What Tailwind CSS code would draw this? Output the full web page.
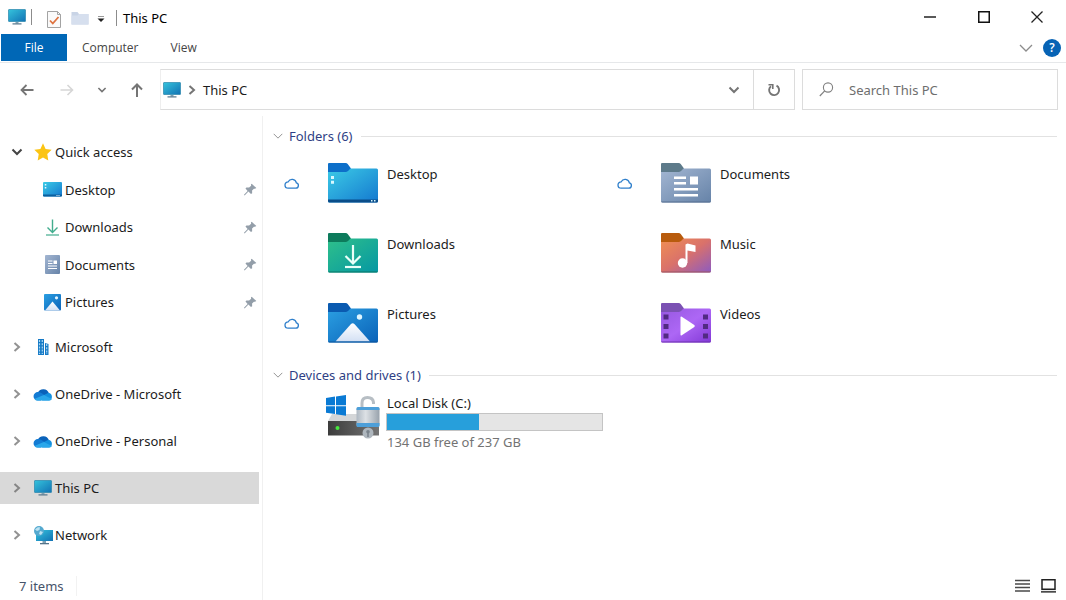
<!DOCTYPE html>
<html lang="en">
<head>
<meta charset="utf-8">
<meta name="viewport" content="width=device-width, initial-scale=1">
<title>This PC</title>
<script src="https://cdn.jsdelivr.net/npm/@tailwindcss/browser@4"></script>
</head>
<body class="bg-white font-['Noto_Sans','Open_Sans',sans-serif] text-[13px] leading-5 text-[#1c1c1c]">
<svg class="absolute size-0" aria-hidden="true">
  <defs>
    <linearGradient id="gScreen" x1="0" y1="0" x2="1" y2="1"><stop offset="0" stop-color="#35c3dc"/><stop offset="1" stop-color="#1272b4"/></linearGradient>
    <linearGradient id="gDesk" x1="0" y1="0" x2="1" y2="1"><stop offset="0" stop-color="#3ccbe6"/><stop offset="1" stop-color="#1478cf"/></linearGradient>
    <linearGradient id="gDown" x1="0" y1="0" x2="1" y2="1"><stop offset="0" stop-color="#2fc08a"/><stop offset="1" stop-color="#0597a3"/></linearGradient>
    <linearGradient id="gPic" x1="0" y1="0" x2="1" y2="1"><stop offset="0" stop-color="#2b9fe2"/><stop offset="1" stop-color="#0a62b8"/></linearGradient>
    <linearGradient id="gDoc" x1="0" y1="0" x2="1" y2="1"><stop offset="0" stop-color="#a3b6d2"/><stop offset="1" stop-color="#6683a8"/></linearGradient>
    <linearGradient id="gMus" x1="0" y1="0" x2="1" y2="1"><stop offset="0" stop-color="#f08f52"/><stop offset=".5" stop-color="#d9716b"/><stop offset="1" stop-color="#8d5bc0"/></linearGradient>
    <linearGradient id="gVid" x1="0" y1="0" x2="1" y2="1"><stop offset="0" stop-color="#9658e0"/><stop offset=".5" stop-color="#ad67f5"/><stop offset="1" stop-color="#8238d6"/></linearGradient>
    <linearGradient id="gHill" x1="0" y1="0" x2="0" y2="1"><stop offset="0" stop-color="#ffffff"/><stop offset="1" stop-color="#d3e0f4"/></linearGradient>
    <linearGradient id="gDrive" x1="0" y1="0" x2="1" y2="0"><stop offset="0" stop-color="#3c3c3c"/><stop offset="1" stop-color="#747474"/></linearGradient>
    <linearGradient id="gLock" x1="0" y1="0" x2="1" y2="0"><stop offset="0" stop-color="#aeb8c2"/><stop offset=".4" stop-color="#dde1e5"/><stop offset="1" stop-color="#98a2ac"/></linearGradient>
  </defs>
  <symbol id="pc" viewBox="0 0 18 16"><rect x=".5" y=".5" width="17" height="12" rx=".5" fill="url(#gScreen)" stroke="#2a86ac" stroke-width=".7"/><path d="M7.500 13h3v1.600h-3z" fill="#7ea0b2"/><path d="M4.500 14.300h9v1.200h-9z" fill="#54748a"/></symbol>
  <symbol id="right" viewBox="0 0 10 12"><path d="M2.500 2l4.500 4-4.500 4" fill="none" stroke="currentColor" stroke-width="2"/></symbol>
  <symbol id="down" viewBox="0 0 12 10"><path d="M1.500 2.500L6 7l4.500-4.500" fill="none" stroke="currentColor" stroke-width="2"/></symbol>
  <symbol id="thin" viewBox="0 0 14 10"><path d="M1 2l6 6 6-6" fill="none" stroke="currentColor" stroke-width="1.300"/></symbol>
  <symbol id="pin" viewBox="0 0 14 14"><path d="M8.300.8l5 4.600-1.500.8-1.100-.1-2 2.100.1 2.800-1.300.9-2.700-2.700-3.900 3.900-.9.200.2-1 3.700-3.800L1.600 6l1-1.200 2.900.1 2.200-2-.2-1.200z" fill="#939ea9"/></symbol>
  <symbol id="cloud" viewBox="0 0 16 12"><path d="M4.200 11.200h7.600a2.700 2.700 0 0 0 .6-5.300A4.400 4.400 0 0 0 4.200 4.800a3.200 3.200 0 0 0 0 6.400z" fill="none" stroke="#2f7fcb" stroke-width="1.300"/></symbol>
  <symbol id="onedrive" viewBox="0 0 20 13"><path d="M5 4.200A6 6 0 0 1 15.800 5L12 9 3 7z" fill="#0a62ba"/><path d="M4.500 12.500A4.200 4.200 0 0 1 5 4.100c2.500 0 4 1.400 7 3.100L8 12.500z" fill="#137bd3"/><path d="M11 7l4.500-2.200A4 4 0 0 1 16 12.600H9z" fill="#1490df"/><path d="M1.600 11C5 9.500 8.500 7.500 11 7c2.500 1.300 5 2.700 7.900 4-.8 1.100-1.700 1.600-2.900 1.600H4.400c-1.200 0-2.200-.6-2.800-1.600z" fill="#2aa7ea"/></symbol>
</svg>

<div class="flex min-h-screen flex-col">
  <header>
    <div class="flex h-[34px] items-center">
      <svg class="ml-2 h-4 w-[18px]"><use href="#pc"/></svg>
      <span class="ml-[5px] h-4 w-px bg-[#8c8c8c]"></span>
      <button aria-label="Properties" class="ml-[15px] mt-1"><svg class="h-[17px] w-[14px]" viewBox="0 0 14 17"><path d="M.5.5h10l3 3v13H.5z" fill="#fafafa" stroke="#a3a3a3"/><path d="M10.500.5v3h3" fill="none" stroke="#a3a3a3"/><path d="M3 9.500l2.800 3L11.500 6" fill="none" stroke="#de7340" stroke-width="1.800"/></svg></button>
      <button aria-label="New folder" class="ml-2.5 mt-0.5"><svg class="h-[14px] w-[18px]" viewBox="0 0 18 14"><path d="M.5 1h6l1.500 2H17.500v10.500H.5z" fill="#c9d4e6"/><path d="M.5 4.500h6L8 3h9.500v10.500H.5z" fill="#d6dfee"/></svg></button>
      <button aria-label="Customize Quick Access Toolbar" class="ml-2 mt-1"><svg class="h-2 w-2" viewBox="0 0 8 8"><path d="M1 1.500h6" stroke="#999"/><path d="M.5 3.500h7L4 7z" fill="#222"/></svg></button>
      <span class="ml-[11px] mt-0.5 h-4 w-px bg-[#8c8c8c]"></span>
      <h1 class="ml-1.5 mt-0.5 grow text-black">This PC</h1>
      <button aria-label="Minimize" class="flex h-8 w-[54px] items-center justify-center"><svg class="size-3" viewBox="0 0 12 12"><path d="M0 6h12" stroke="#222" stroke-width="1.500"/></svg></button>
      <button aria-label="Maximize" class="flex h-8 w-[53px] items-center justify-center"><svg class="size-3" viewBox="0 0 12 12"><path d="M.75.75h10.500v10.500H.75z" fill="none" stroke="#111" stroke-width="1.500"/></svg></button>
      <button aria-label="Close" class="mr-0.5 flex h-8 w-[54px] items-center justify-center"><svg class="size-3" viewBox="0 0 12 12"><path d="M.5.5l11 11M11.500.5l-11 11" stroke="#222" stroke-width="1.300"/></svg></button>
    </div>
    <nav class="flex h-[29px] items-center border-b border-[#e6e8ea] font-['Open_Sans','Noto_Sans',sans-serif] text-xs text-[#454545]" aria-label="Ribbon">
      <button class="ml-px flex h-[27px] w-[66px] items-center justify-center self-start bg-[#0067b6] text-white">File</button>
      <button class="ml-[15px]">Computer</button>
      <button class="ml-8">View</button>
      <span class="grow"></span>
      <button aria-label="Expand the ribbon" class="text-[#8c8c8c]"><svg class="h-[10px] w-[14px]"><use href="#thin"/></svg></button>
      <button aria-label="Help" class="ml-2.5 mr-[5px] flex size-[18px] items-center justify-center rounded-full bg-[#0763b5] text-xs font-semibold text-white">?</button>
    </nav>
    <div class="mt-1.5 flex h-[41px] items-center pr-2">
      <div class="flex w-40 shrink-0 items-center text-[#757575]">
        <button aria-label="Back" class="ml-5"><svg class="size-[14px]" viewBox="0 0 14 14"><path d="M13.500 7H1.500M6.500 2l-5 5 5 5" fill="none" stroke="currentColor" stroke-width="1.800"/></svg></button>
        <button aria-label="Forward" class="ml-[26px] text-[#d6d6d6]"><svg class="size-[14px]" viewBox="0 0 14 14"><path d="M.5 7h12M7.500 2l5 5-5 5" fill="none" stroke="currentColor" stroke-width="1.600"/></svg></button>
        <button aria-label="Recent locations" class="ml-[23px]"><svg class="h-2 w-2.5"><use href="#down"/></svg></button>
        <button aria-label="Up" class="ml-[23px]"><svg class="size-[14px]" viewBox="0 0 14 14"><path d="M7 14V1.500M2 6.500l5-5 5 5" fill="none" stroke="currentColor" stroke-width="2"/></svg></button>
      </div>
      <div class="flex h-full grow items-center border border-[#dcdcdc] border-l-[#eeeeee] text-[#757575]">
        <svg class="ml-0.5 h-4 w-[18px]"><use href="#pc"/></svg>
        <svg class="ml-1.5 h-3 w-2.5"><use href="#right"/></svg>
        <a href="#" class="ml-1.5 grow text-[#1c1c1c]">This PC</a>
        <button aria-label="Previous locations" class="mr-[13px]"><svg class="h-[10px] w-3"><use href="#down"/></svg></button>
        <button aria-label="Refresh" class="flex h-full w-[41px] items-center justify-center border-l border-[#dcdcdc]"><svg class="size-[14px]" viewBox="0 0 14 14"><path d="M9.500 2.700A5 5 0 1 1 4 3.200" fill="none" stroke="currentColor" stroke-width="1.900"/><path d="M1.500 1.800h4.300V6" fill="none" stroke="currentColor" stroke-width="1.600"/></svg></button>
      </div>
      <label class="ml-[7px] flex h-full w-64 shrink-0 items-center border border-[#dcdcdc]">
        <svg class="ml-4 size-[15px]" viewBox="0 0 15 15"><circle cx="9" cy="5.500" r="4.600" fill="none" stroke="#808080" stroke-width="1.100"/><path d="M5.700 8.800L.8 14" stroke="#808080" stroke-width="1.200"/></svg>
        <input type="search" aria-label="Search This PC" placeholder="Search This PC" class="ml-[15px] w-0 grow bg-transparent outline-none placeholder:text-[#6e6e6e]">
      </label>
    </div>
  </header>

  <div class="mt-1.5 flex grow">
    <aside class="flex w-[263px] shrink-0 flex-col border-r border-[#f0f0f0] pt-5">
      <nav class="flex flex-col" aria-label="Navigation pane">
        <a href="#" class="flex h-8 items-center pl-[11px]">
          <svg class="h-[10px] w-3 text-[#444]"><use href="#down"/></svg>
          <svg class="ml-[11px] size-[18px]" viewBox="0 0 16 16"><path d="M8 .3l2.300 5 5.400.7-3.900 3.800.9 5.700L8 12.800l-4.700 2.700.9-5.700L.3 6l5.400-.7z" fill="#fbc414"/></svg>
          <span class="ml-[3px]">Quick access</span>
        </a>
        <ul class="mt-[3px] grid h-[150px] grid-rows-4 pl-[43px] pr-[5px]">
          <li class="flex items-center"><a href="#" class="flex grow items-center gap-[3px]"><svg class="h-[15px] w-[19px]" viewBox="0 0 19 15"><rect width="19" height="14.500" rx="1" fill="url(#gDesk)"/><path d="M0 12.500h19v1.200a1 1 0 0 1-1 .8H1a1 1 0 0 1-1-.8z" fill="#0c5f9d"/><path d="M1.800 2h1.500v1.500H1.800zM1.800 5h1.500v1.500H1.800zM13.500 13h1v1h-1zM15.500 13h1v1h-1z" fill="#e6f9ff"/></svg>Desktop</a><svg class="size-[13px]"><use href="#pin"/></svg></li>
          <li class="flex items-center"><a href="#" class="flex grow items-center gap-[3px]"><svg class="h-[17px] w-[19px]" viewBox="0 0 19 17"><path d="M9.500.5v13M4.500 8.500l5 5 5-5" fill="none" stroke="#42ad8e" stroke-width="1.400"/><path d="M3 16h13" stroke="#69bda5" stroke-width="1.500"/></svg>Downloads</a><svg class="size-[13px]"><use href="#pin"/></svg></li>
          <li class="flex items-center"><a href="#" class="flex grow items-center gap-[3px]"><svg class="h-[19px] w-[19px]" viewBox="0 0 19 19"><rect x="2" width="15" height="19" rx="1" fill="url(#gDoc)"/><path d="M5 6h4.500M5 8.500h4.500M5 11h9M5 13.500h9" stroke="#fff" stroke-width="1.200"/><path d="M10.500 5.500H14V9h-3.500z" fill="#fff"/></svg>Documents</a><svg class="size-[13px]"><use href="#pin"/></svg></li>
          <li class="flex items-center"><a href="#" class="flex grow items-center gap-[3px]"><svg class="h-[17px] w-[19px]" viewBox="0 0 19 17"><rect x="1" width="17" height="16.500" rx="1" fill="url(#gPic)"/><path d="M2 16.500L9.500 7.500l7.500 9z" fill="url(#gHill)"/><circle cx="13.500" cy="3.800" r="1.600" fill="#e3f5ff"/></svg>Pictures</a><svg class="size-[13px]"><use href="#pin"/></svg></li>
        </ul>
        <div class="mt-2.5 flex flex-col gap-[15px]">
          <a href="#" class="flex h-8 items-center pl-3"><svg class="h-3 w-2.5 text-[#929292]"><use href="#right"/></svg>
            <svg class="ml-3 h-4 w-[18px]" viewBox="0 0 18 16"><path d="M4 0h6v16H4zM11 4l3.500 1v11H11z" fill="#1479c6"/><path d="M5.500 1v14M8.300 1v14M12.700 5v10" stroke="#abd9f4" stroke-width="1.200" stroke-dasharray="2 1.200"/></svg>
            <span class="ml-[3px]">Microsoft</span></a>
          <a href="#" class="flex h-8 items-center pl-3"><svg class="h-3 w-2.5 text-[#929292]"><use href="#right"/></svg><svg class="ml-[11px] h-[13px] w-5"><use href="#onedrive"/></svg><span class="ml-0.5">OneDrive - Microsoft</span></a>
          <a href="#" class="flex h-8 items-center pl-3"><svg class="h-3 w-2.5 text-[#929292]"><use href="#right"/></svg><svg class="ml-[11px] h-[13px] w-5"><use href="#onedrive"/></svg><span class="ml-0.5">OneDrive - Personal</span></a>
          <a href="#" aria-current="page" class="mr-[3px] flex h-8 items-center bg-[#d9d9d9] pl-3"><svg class="h-3 w-2.5 text-[#858585]"><use href="#right"/></svg><svg class="ml-3 h-4 w-[18px]"><use href="#pc"/></svg><span class="ml-[3px]">This PC</span></a>
          <a href="#" class="flex h-8 items-center pl-3"><svg class="h-3 w-2.5 text-[#929292]"><use href="#right"/></svg>
            <svg class="ml-3 h-[19px] w-[19px]" viewBox="0 0 19 19"><path d="M2 4h17v11H2z" fill="url(#gScreen)"/><path d="M8.500 15h3.500v2H8.500z" fill="#7ea0b2"/><path d="M6 17h9v1.300H6z" fill="#54748a"/><circle cx="5" cy="5" r="5" fill="#55a9cf"/><path d="M1 3.500C3 1 4.500 1 6 1.300L5.500 4 3 5zM6 5l3 1-2 3-2-1z" fill="#bce2f2"/></svg>
            <span class="ml-0.5">Network</span></a>
        </div>
      </nav>
      <footer class="mt-auto flex h-[29px] items-center pl-[19px] text-[#46536a]"><span class="border-r border-[#f2f2f2] pr-3">7 items</span></footer>
    </aside>

    <main class="flex min-w-0 grow flex-col">
      <section class="pr-[9px] pt-2.5">
        <div class="flex items-center pl-2.5">
          <button aria-label="Collapse Folders" class="text-[#8c8c8c]"><svg class="h-2 w-2.5"><use href="#thin"/></svg></button>
          <h2 class="ml-1.5 text-[#2f3f85]">Folders (6)</h2>
          <span class="ml-2 h-px grow bg-[#e2e2e2]"></span>
        </div>
        <ul class="mt-[17px] grid auto-rows-[40px] grid-cols-[333px_1fr] gap-y-[30px]">
          <li class="flex items-start pl-[21px]">
            <svg class="mt-3.5 h-3 w-4"><use href="#cloud"/></svg>
            <svg class="ml-7 h-10 w-[50px]" viewBox="0 0 50 40"><path d="M1 0h16.500q1.500 0 2.200 1L23 5.500 20 12H0V1.200Q0 0 1 0z" fill="#0d6fc9"/><path d="M0 9h17.500q1.500 0 2.500-1l2.500-2.500H48.500Q50 5.500 50 7v31q0 1.500-1.500 1.500h-47Q0 39.500 0 38z" fill="url(#gDesk)"/><path d="M0 36.500h50V38q0 1.500-1.500 1.500h-47Q0 39.500 0 38z" fill="#0a4d89"/><path d="M3 13h3v3H3zM3 17.800h3v3H3zM43 37h1.500v1.500H43zM46 37h1.500v1.500H46z" fill="#d9f8ff"/></svg>
            <a href="#" class="ml-[9px] mt-px">Desktop</a>
          </li>
          <li class="flex items-start pl-[21px]">
            <svg class="mt-3.5 h-3 w-4"><use href="#cloud"/></svg>
            <svg class="ml-7 h-10 w-[50px]" viewBox="0 0 50 40"><path d="M1 0h16.500q1.500 0 2.200 1L23 5.500 20 12H0V1.200Q0 0 1 0z" fill="#5d7a8a"/><path d="M0 9h17.500q1.500 0 2.500-1l2.500-2.500H48.500Q50 5.500 50 7v31q0 1.500-1.500 1.500h-47Q0 39.500 0 38z" fill="url(#gDoc)"/><path d="M0 38.500h50q-.5 1-1.500 1h-47q-1 0-1.500-1z" fill="#566f90"/><path d="M13 13.500h12V16H13zM13 19h12v2.500H13zM13 25h24v2.500H13zM13 31h24v2.500H13zM29 13.500h8v8h-8z" fill="#fff"/></svg>
            <a href="#" class="ml-[9px] mt-px">Documents</a>
          </li>
          <li class="flex items-start pl-[65px]">
            <svg class="h-10 w-[50px]" viewBox="0 0 50 40"><path d="M1 0h16.500q1.500 0 2.200 1L23 5.500 20 12H0V1.200Q0 0 1 0z" fill="#0d7b5c"/><path d="M0 9h17.500q1.500 0 2.500-1l2.500-2.500H48.500Q50 5.500 50 7v31q0 1.500-1.500 1.500h-47Q0 39.500 0 38z" fill="url(#gDown)"/><path d="M0 38.500h50q-.5 1-1.500 1h-47q-1 0-1.500-1z" fill="#087564"/><path d="M25 12v18M17.500 23l7.500 7.500L32.500 23" fill="none" stroke="#e9fff8" stroke-width="2.200"/><path d="M17 34h16" stroke="#e9fff8" stroke-width="2.200"/></svg>
            <a href="#" class="ml-[9px] mt-px">Downloads</a>
          </li>
          <li class="flex items-start pl-[65px]">
            <svg class="h-10 w-[50px]" viewBox="0 0 50 40"><path d="M1 0h16.500q1.500 0 2.200 1L23 5.500 20 12H0V1.200Q0 0 1 0z" fill="#b85b0d"/><path d="M0 9h17.500q1.500 0 2.500-1l2.500-2.500H48.500Q50 5.500 50 7v31q0 1.500-1.500 1.500h-47Q0 39.500 0 38z" fill="url(#gMus)"/><path d="M0 38.500h50q-.5 1-1.500 1h-47q-1 0-1.500-1z" fill="#9a5560"/><circle cx="21.500" cy="30" r="4.700" fill="#fff"/><path d="M24.500 30V11.500l2-1 8 2v6.500l-8-1.500V30z" fill="#fff"/></svg>
            <a href="#" class="ml-[9px] mt-px">Music</a>
          </li>
          <li class="flex items-start pl-[21px]">
            <svg class="mt-3.5 h-3 w-4"><use href="#cloud"/></svg>
            <svg class="ml-7 h-10 w-[50px]" viewBox="0 0 50 40"><path d="M1 0h16.500q1.500 0 2.200 1L23 5.500 20 12H0V1.200Q0 0 1 0z" fill="#0a5ab0"/><path d="M0 9h17.500q1.500 0 2.500-1l2.500-2.500H48.500Q50 5.500 50 7v31q0 1.500-1.500 1.500h-47Q0 39.500 0 38z" fill="url(#gPic)"/><path d="M7.500 38.500L23 21q1.700-1.700 3.400 0L42 38.500z" fill="url(#gHill)"/><circle cx="31.500" cy="14" r="2.700" fill="#dff6ff"/><path d="M0 38.500h50q-.5 1-1.500 1h-47q-1 0-1.500-1z" fill="#0b5299"/></svg>
            <a href="#" class="ml-[9px] mt-px">Pictures</a>
          </li>
          <li class="flex items-start pl-[65px]">
            <svg class="h-10 w-[50px]" viewBox="0 0 50 40"><path d="M1 0h16.500q1.500 0 2.200 1L23 5.500 20 12H0V1.200Q0 0 1 0z" fill="#7b51b3"/><path d="M0 9h17.500q1.500 0 2.500-1l2.500-2.500H48.500Q50 5.500 50 7v31q0 1.500-1.500 1.500h-47Q0 39.500 0 38z" fill="url(#gVid)"/><path d="M0 38.500h50q-.5 1-1.500 1h-47q-1 0-1.500-1z" fill="#6c31ad"/><path d="M2.500 11.500h5v5h-5zM2.500 21h5v5h-5zM2.500 30.500h5v5h-5zM42 11.500h5v5h-5zM42 21h5v5h-5zM42 30.500h5v5h-5z" fill="#522a83"/><path d="M19.500 14.500q0-1.500 1.300-.8l12.500 8.400q1 .9 0 1.800l-12.500 8.400q-1.300.7-1.300-.8z" fill="#fff"/></svg>
            <a href="#" class="ml-[9px] mt-px">Videos</a>
          </li>
        </ul>
      </section>

      <section class="pr-[9px] pt-[22px]">
        <div class="flex items-center pl-2.5">
          <button aria-label="Collapse Devices and drives" class="text-[#8c8c8c]"><svg class="h-2 w-2.5"><use href="#thin"/></svg></button>
          <h2 class="ml-1.5 text-[#2f3f85]">Devices and drives (1)</h2>
          <span class="ml-2 h-px grow bg-[#e2e2e2]"></span>
        </div>
        <div class="mt-2 flex items-start pl-[63px]">
          <svg class="mt-0.5 h-[44px] w-[54px] shrink-0" viewBox="0 0 54 44"><path d="M6 19h42l5 7H2z" fill="#d4d6d8"/><path d="M2 26h51v14.500H2z" fill="url(#gDrive)"/><circle cx="11.500" cy="33" r="2" fill="#46e83e"/><path d="M0 3l9-1.400v8.700H0zM10 1.400L20 0v10.300H10zM0 11.300h9V19l-9-1.300zM10 11.300h10v9.500l-10-1.500z" fill="#0a7ad4"/><path d="M36 14V8q0-5.500 5.500-5.500T47.500 7.500V9" fill="none" stroke="#b7bec4" stroke-width="3"/><rect x="30.500" y="12" width="23" height="20" rx="2" fill="url(#gLock)"/><path d="M30.500 15v-1.500q0-1.500 1.500-1.500h20q1.500 0 1.500 1.500V15zM30.500 28h23v2.500q0 1.500-1.500 1.500H32q-1.500 0-1.500-1.500z" fill="#4d9fd9"/><circle cx="42" cy="38" r="5.500" fill="#aeb6bd"/><circle cx="42" cy="36.700" r="1.800" fill="#7a838c"/><path d="M41.200 37h1.600v5h-1.600z" fill="#7a838c"/></svg>
          <div class="ml-1.5 w-[217px]">
            <a href="#" class="ml-px block">Local Disk (C:)</a>
            <div role="meter" aria-label="Space used on Local Disk (C:)" aria-valuemin="0" aria-valuemax="237" aria-valuenow="103" class="h-[18px] border border-[#c4c4c4] bg-[#e5e5e5]"><div class="h-full bg-[#279fdb]" style="width:43%"></div></div>
            <p class="ml-px mt-px text-[#737373]">134 GB free of 237 GB</p>
          </div>
        </div>
      </section>

      <footer class="mt-auto flex h-[29px] items-center justify-end gap-[11px] pr-2.5">
        <button aria-label="Details view"><svg class="h-[14px] w-[15px]" viewBox="0 0 15 14"><path d="M0 1.500h15M0 5h15M0 8.500h15M0 12h15" stroke="#4a4a4a" stroke-width="1.500"/></svg></button>
        <button aria-label="Large icons view"><svg class="h-[14px] w-[15px]" viewBox="0 0 15 14"><path d="M1 .75h13v9.500H1z" fill="#fff" stroke="#222" stroke-width="1.500"/><path d="M0 12.800h15" stroke="#4a4a4a" stroke-width="1.800"/></svg></button>
      </footer>
    </main>
  </div>
</div>
</body>
</html>
